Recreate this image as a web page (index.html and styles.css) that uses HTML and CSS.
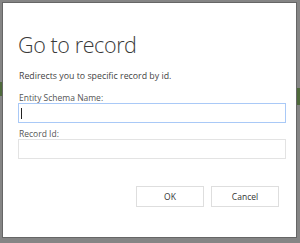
FILE: index.html
```html
<!DOCTYPE html>
<html>
<head>
<meta charset="utf-8">
<link rel="stylesheet" href="styles.css">
</head>
<body>
<div class="backdrop">
  <span class="glow glow-left"></span>
  <span class="glow glow-right"></span>
  <div class="dialog">
    <h1 class="title">Go to record</h1>
    <p class="desc">Redirects you to specific record by id.</p>
    <label class="label" for="schema">Entity Schema Name:</label>
    <div class="field">
      <input id="schema" class="input input-focus" type="text">
      <span class="caret"></span>
    </div>
    <label class="label label-2" for="rid">Record Id:</label>
    <div class="field">
      <input id="rid" class="input" type="text">
    </div>
    <div class="actions">
      <button class="btn">OK</button>
      <button class="btn">Cancel</button>
    </div>
  </div>
</div>
</body>
</html>
```
FILE: styles.css
```css
html, body {
  margin: 0;
  padding: 0;
}
body {
  width: 300px;
  height: 243px;
  overflow: hidden;
  background: #7d7d7d;
  font-family: "Open Sans", "Noto Sans", sans-serif;
}
.backdrop {
  position: relative;
  box-sizing: border-box;
  width: 300px;
  height: 243px;
  padding: 3px 4px 6px 3px;
  background: #858585;
}
.glow {
  position: absolute;
  width: 4px;
  background: #4f6a3c;
}
.glow-left {
  left: 0;
  top: 82px;
  height: 14px;
  width: 3px;
}
.glow-right {
  right: 0;
  top: 88px;
  height: 17px;
}
.dialog {
  position: relative;
  box-sizing: border-box;
  height: 234px;
  background: #fff;
  padding: 27px 10px 0 15px;
  box-shadow: 0 0 0 1px #666;
}
.title {
  margin: 0;
  font-weight: 300;
  font-size: 21.5px;
  line-height: 30px;
  color: #3a3a3a;
  letter-spacing: -0.4px;
}
.desc {
  margin: 10px 0 0 1px;
  font-size: 8.8px;
  line-height: 12px;
  color: #444;
}
.label {
  display: block;
  margin: 10px 0 0 1px;
  font-size: 8.5px;
  line-height: 11px;
  color: #555;
}
.label-2 {
  margin-top: 5px;
}
.field {
  position: relative;
}
.input {
  display: block;
  box-sizing: border-box;
  width: 268px;
  height: 20px;
  margin: 0;
  border: 1px solid #e3e3e3;
  background: #fff;
  outline: none;
  caret-color: transparent;
}
.input-focus {
  border-color: #a9c9f7;
}
.caret {
  position: absolute;
  left: 3px;
  top: 5px;
  width: 1px;
  height: 11px;
  background: #222;
}
.actions {
  display: flex;
  justify-content: flex-end;
  gap: 7px;
  margin-top: 27px;
  padding-right: 7px;
}
.btn {
  box-sizing: border-box;
  width: 68px;
  height: 21px;
  padding: 0;
  border: 1px solid #dedede;
  background: #fff;
  font-family: "Open Sans", "Noto Sans", sans-serif;
  font-size: 8.5px;
  color: #333;
}
```
